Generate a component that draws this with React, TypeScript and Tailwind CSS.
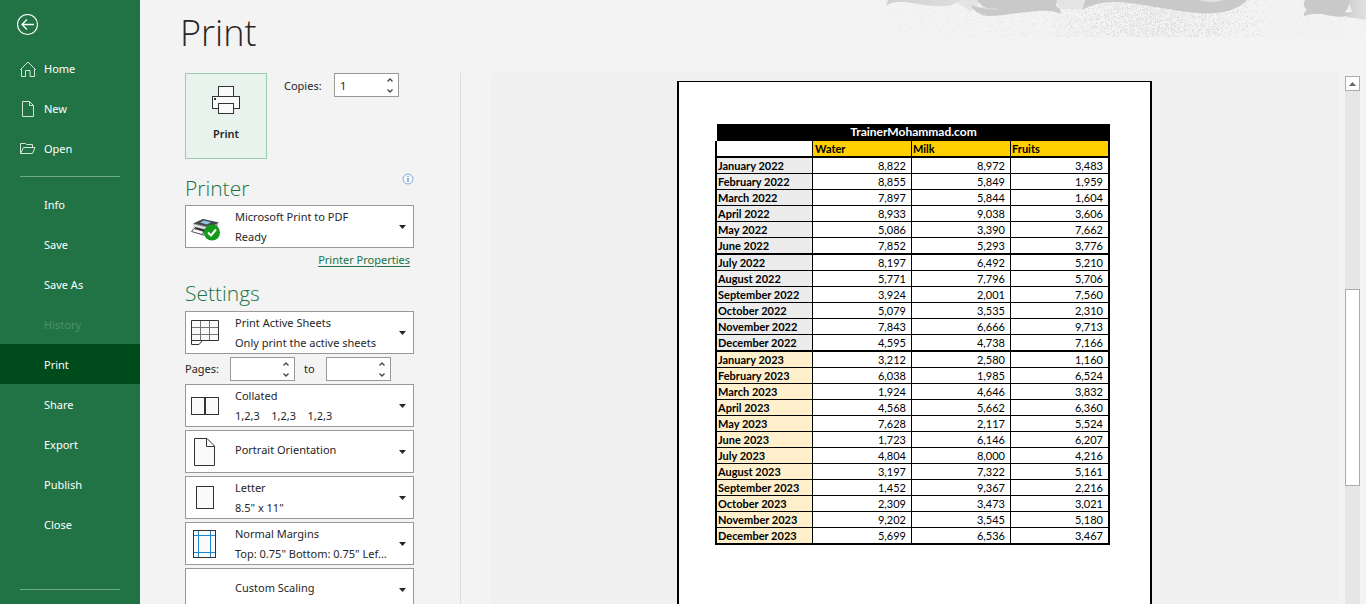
import type { ReactNode } from 'react';

type Row = [string, string, string, string];

const ROWS: Row[] = [
  ['January 2022', '8,822', '8,972', '3,483'],
  ['February 2022', '8,855', '5,849', '1,959'],
  ['March 2022', '7,897', '5,844', '1,604'],
  ['April 2022', '8,933', '9,038', '3,606'],
  ['May 2022', '5,086', '3,390', '7,662'],
  ['June 2022', '7,852', '5,293', '3,776'],
  ['July 2022', '8,197', '6,492', '5,210'],
  ['August 2022', '5,771', '7,796', '5,706'],
  ['September 2022', '3,924', '2,001', '7,560'],
  ['October 2022', '5,079', '3,535', '2,310'],
  ['November 2022', '7,843', '6,666', '9,713'],
  ['December 2022', '4,595', '4,738', '7,166'],
  ['January 2023', '3,212', '2,580', '1,160'],
  ['February 2023', '6,038', '1,985', '6,524'],
  ['March 2023', '1,924', '4,646', '3,832'],
  ['April 2023', '4,568', '5,662', '6,360'],
  ['May 2023', '7,628', '2,117', '5,524'],
  ['June 2023', '1,723', '6,146', '6,207'],
  ['July 2023', '4,804', '8,000', '4,216'],
  ['August 2023', '3,197', '7,322', '5,161'],
  ['September 2023', '1,452', '9,367', '2,216'],
  ['October 2023', '2,309', '3,473', '3,021'],
  ['November 2023', '9,202', '3,545', '5,180'],
  ['December 2023', '5,699', '6,536', '3,467'],
];

/* Rows closed by a two-pixel rule. */
const HEAVY = new Set([5, 11, 23]);

/* Deterministic grain under the ribbons of the header art. */
function grain(count: number, x0: number, x1: number, seedStart: number) {
  let seed = seedStart;
  const next = () => {
    seed = (seed * 1103515245 + 12345) % 2147483648;
    return seed / 2147483648;
  };
  let d = '';
  for (let i = 0; i < count; i++) {
    const x = Math.floor(x0 + ((next() + next()) / 2) * (x1 - x0));
    const y = Math.floor(next() * 37);
    d += `M${x} ${y}h1v1h-1z`;
  }
  return d;
}
const GRAIN_WIDE = grain(1700, 0, 420, 7);
const GRAIN_DENSE = grain(2300, 180, 405, 91);
const GRAIN_RIGHT = grain(500, 360, 520, 33);

function HeaderArt() {
  return (
    <svg className="pointer-events-none absolute top-0 right-0" width="500" height="44" aria-hidden="true">
      <defs>
        <linearGradient id="edge" x1="0" x2="1" y1="0" y2="0">
          <stop offset="0" stopColor="#cfcfcf" />
          <stop offset="1" stopColor="#e0e0e0" />
        </linearGradient>
        <linearGradient id="tail" x1="0" x2="1" y1="0" y2="0">
          <stop offset="0" stopColor="#d0d0d0" />
          <stop offset="1" stopColor="#dedede" />
        </linearGradient>
      </defs>
      <path d={GRAIN_WIDE} fill="#eaeaea" />
      <path d={GRAIN_DENSE} fill="#e1e1e1" />
      <path d={GRAIN_RIGHT} fill="#ececec" />
      <path d="M92 0H114Q112 8 104 11Q98 6 92 4Z M190 0H218L216 9H194Z" fill="#e4e4e4" />
      <path d="M22 0L20 6Q26 1 40 2C54 4 66 7 80 6Q90 5 94 0Z" fill="url(#tail)" />
      <path d="M482 0H500V20Q490 18 480 17L486 12Z" fill="url(#edge)" />
      <path
        d="M111 0Q114 5 120 8Q110 8 105 5Q108 14 122 16C136 16 148 13 162 12C178 10 186 10 195 14L194 9L190 6L191 0Z"
        fill="#c9c9c9"
      />
      <path d="M106 5Q116 9 131 9" fill="none" stroke="#dcdcdc" />
      <path d="M219 0L216 10Q228 3 244 2C276 2 296 10 332 13C360 15 374 8 381 0Z" fill="#c9c9c9" />
      <path d="M332 0Q345 4 358 0Z" fill="#e3e3e3" />
      <path d="M439 0Q436 6 441 10Q437 13 438 16Q446 13 456 14C472 18 482 18 486 12Q482 13 479 12Q484 7 483 0Z" fill="#c9c9c9" />
    </svg>
  );
}

const chrome = 'h-4 w-4 shrink-0';

function HomeIcon() {
  return (
    <svg className={chrome} viewBox="0 0 16 16" fill="none" stroke="#d3e5da" aria-hidden="true">
      <path d="M0.5 8.5L8 1L15.5 8.5M1.5 7.5V15.5H5.5V9.5H10V15.5H14.5V7.5" />
    </svg>
  );
}
function NewIcon() {
  return (
    <svg className={chrome} viewBox="0 0 16 16" fill="none" stroke="#d3e5da" aria-hidden="true">
      <path d="M2.5 0.5H9.5L13.5 4.5V15.5H2.5ZM9.5 0.5V4.5H13.5" />
    </svg>
  );
}
function OpenIcon() {
  return (
    <svg className={chrome} viewBox="0 0 16 16" fill="none" stroke="#d3e5da" aria-hidden="true">
      <path d="M0.5 12.5V2.5H5.5L6.5 3.5H12.5V6.5M0.5 12.5L3.5 6.5H15L12.5 12.5H0.5" />
    </svg>
  );
}

function NavItem({ label, icon, current, disabled }: { label: string; icon?: ReactNode; current?: boolean; disabled?: boolean }) {
  return (
    <li>
      <button
        type="button"
        disabled={disabled}
        aria-current={current ? 'page' : undefined}
        className={`flex h-10 w-full items-center gap-2 pt-0.5 pl-5 text-left ${current ? 'bg-[#004b1c]' : ''} ${
          disabled ? 'text-[#4f9169]' : 'text-white'
        }`}
      >
        {icon ?? <span className="w-4" />}
        {label}
      </button>
    </li>
  );
}

function Sidebar() {
  return (
    <nav aria-label="File" className="flex w-[140px] shrink-0 flex-col bg-[#217346] text-[11px]">
      <button type="button" aria-label="Back" className="mt-3.5 ml-[17px] h-[22px] w-[22px]">
        <svg width="22" height="22" fill="none" stroke="#fff" aria-hidden="true">
          <circle cx="10.5" cy="10.5" r="10" strokeWidth="1.2" />
          <path d="M17 10.5H5.5M10 5.5L5 10.5L10 15.5" strokeWidth="1.3" />
        </svg>
      </button>
      <ul className="mt-3">
        <NavItem label="Home" icon={<HomeIcon />} />
        <NavItem label="New" icon={<NewIcon />} />
        <NavItem label="Open" icon={<OpenIcon />} />
      </ul>
      <hr className="mx-5 mt-2 mb-[7px] border-[#6fab87]" />
      <ul>
        <NavItem label="Info" />
        <NavItem label="Save" />
        <NavItem label="Save As" />
        <NavItem label="History" disabled />
        <NavItem label="Print" current />
        <NavItem label="Share" />
        <NavItem label="Export" />
        <NavItem label="Publish" />
        <NavItem label="Close" />
      </ul>
      <hr className="mx-5 mt-auto mb-3.5 border-[#6fab87]" />
    </nav>
  );
}

function Spinner({ id, label, value }: { id: string; label: string; value?: string }) {
  return (
    <div className="flex h-6 w-[65px] border border-[#999] bg-white">
      <input id={id} aria-label={label} defaultValue={value} inputMode="numeric" className="w-12 min-w-0 flex-1 pt-0.5 pl-[5px] text-[11px] outline-none" />
      <div className="flex w-4 flex-col">
        <button type="button" aria-label={`${label} up`} className="flex flex-1 items-center justify-center">
          <svg width="6" height="4" fill="none" stroke="#444" strokeWidth="1.3" aria-hidden="true">
            <path d="M0.5 3.5L3 1L5.5 3.5" />
          </svg>
        </button>
        <button type="button" aria-label={`${label} down`} className="flex flex-1 items-center justify-center">
          <svg width="6" height="4" fill="none" stroke="#444" strokeWidth="1.3" aria-hidden="true">
            <path d="M0.5 0.5L3 3L5.5 0.5" />
          </svg>
        </button>
      </div>
    </div>
  );
}

function Picker({ label, value, detail, icon }: { label: string; value: string; detail?: string; icon?: ReactNode }) {
  return (
    <div className="grid h-[43px] shrink-0 items-center border border-[#999] bg-white">
      <div className="col-start-1 row-start-1 pl-[5px]">{icon}</div>
      <select
        aria-label={label}
        className={`col-start-1 row-start-1 h-full w-full appearance-none bg-transparent pl-[49px] outline-none ${
          detail ? 'pb-[19px]' : 'pb-0.5'
        }`}
      >
        <option>{value}</option>
      </select>
      {detail && (
        <span className="pointer-events-none col-start-1 row-start-1 self-end pl-[49px] leading-5 whitespace-pre">{detail}</span>
      )}
      <svg className="pointer-events-none col-start-1 row-start-1 mr-[7px] justify-self-end" width="7" height="4" aria-hidden="true">
        <path d="M0 0H7L3.5 4Z" fill="#262626" />
      </svg>
    </div>
  );
}

function PrinterDeviceIcon() {
  return (
    <svg width="32" height="28" aria-hidden="true">
      <path d="M2 11L12 6L27 10L26 19L12 23L2 18Z" fill="#9b9fa2" />
      <path d="M2 10.5L12 6L28 9.5L19 14Z" fill="#45494c" />
      <path d="M9 9.5L13 7.5L20 9.2L16 11.5Z" fill="#8fc4e8" />
      <path d="M2 11L17 15V21L2 17Z" fill="#dfe1e2" />
      <path d="M4 14L14 16.5V19L4 17Z" fill="#2b2d2e" />
      <path d="M0.5 18.5L3 15.5L13 18.5L11 21.5Z" fill="#fff" stroke="#505356" />
      <circle cx="21" cy="19.5" r="8" fill="#129a1b" />
      <path d="M17 19.5L20 22.5L25 16.5" fill="none" stroke="#fff" strokeWidth="2" />
    </svg>
  );
}
function SheetsIcon() {
  return (
    <svg width="30" height="28" aria-hidden="true">
      <path d="M0.5 1.5H27.5V21.5H11.5L8.5 25.5H0.5Z" fill="#fafafa" />
      <path d="M1 8.5H27M1 15.5H27M9.5 2V21M18.5 2V21" stroke="#777" />
      <path d="M0.5 1.5H27.5V21.5H0.5ZM0.5 21.5V25.5H8L11.5 21.5" fill="none" stroke="#333" />
    </svg>
  );
}
function CollatedIcon() {
  return (
    <svg width="28" height="18" fill="#fafafa" stroke="#333" aria-hidden="true">
      <rect x="0.5" y="0.5" width="13" height="17" />
      <rect x="14.5" y="0.5" width="13" height="17" />
    </svg>
  );
}
function PortraitIcon() {
  return (
    <svg className="ml-[3px]" width="22" height="28" fill="#fafafa" stroke="#333" aria-hidden="true">
      <path d="M0.5 0.5H13L20.5 8V27.5H0.5ZM12.5 0.5V8.5H20.5" />
    </svg>
  );
}
function LetterIcon() {
  return (
    <svg className="ml-[5px]" width="18" height="23" fill="#fafafa" stroke="#333" aria-hidden="true">
      <rect x="0.5" y="0.5" width="17" height="22" />
    </svg>
  );
}
function MarginsIcon() {
  return (
    <svg className="ml-0.5" width="23" height="28" fill="none" aria-hidden="true">
      <rect x="0.5" y="0.5" width="22" height="27" fill="#fafafa" />
      <path d="M5.5 1V27M17.5 1V27M1 5.5H22M1 22.5H22" stroke="#1e88cf" />
      <rect x="0.5" y="0.5" width="22" height="27" stroke="#333" />
    </svg>
  );
}

function SettingsPanel() {
  return (
    <section aria-label="Print settings" className="flex w-[229px] shrink-0 flex-col">
      <div className="flex items-start">
        <button
          type="button"
          className="flex h-[86px] w-[82px] flex-col items-center gap-3 border border-[#9bcbb0] bg-[#e9f3ed] pt-3 font-semibold"
        >
          <svg width="28" height="28" fill="#fafafa" stroke="#333" aria-hidden="true">
            <rect x="6.5" y="0.5" width="15" height="12" />
            <rect x="0.5" y="10.5" width="27" height="12" />
            <rect x="6.5" y="17.5" width="15" height="10" />
            <rect x="2" y="12" width="2" height="2" fill="#333" stroke="none" />
          </svg>
          Print
        </button>
        <label htmlFor="copies" className="ml-[17px] w-[50px] pt-px leading-6">
          Copies:
        </label>
        <Spinner id="copies" label="Copies" value="1" />
      </div>

      <div className="mt-3.5 flex h-8 items-start justify-between">
        <h2 className="font-['Open_Sans',sans-serif] text-[21px] leading-[30px] font-light text-[#217346]">Printer</h2>
        <button type="button" aria-label="Printer status" className="h-3 w-3">
          <svg width="12" height="12" fill="none" aria-hidden="true">
            <circle cx="6" cy="6" r="5" fill="#f6f9fe" stroke="#84a9dc" />
            <path d="M6 5V9M6 3V4" stroke="#3f6db5" />
          </svg>
        </button>
      </div>
      <div className="mt-0.5 flex flex-col">
        <Picker label="Printer" value="Microsoft Print to PDF" detail="Ready" icon={<PrinterDeviceIcon />} />
      </div>
      <a href="#properties" className="mt-0.5 mr-1 self-end leading-5 text-[#217346] underline underline-offset-2">
        Printer Properties
      </a>

      <h2 className="mt-2 mb-[3px] font-['Open_Sans',sans-serif] text-[21px] leading-[30px] font-light text-[#217346]">Settings</h2>
      <div className="flex flex-col gap-[3px]">
        <Picker label="What to print" value="Print Active Sheets" detail="Only print the active sheets" icon={<SheetsIcon />} />
        <div className="flex h-6 items-center">
          <label htmlFor="from" className="w-[45px]">
            Pages:
          </label>
          <Spinner id="from" label="From page" />
          <label htmlFor="to" className="w-[31px] pl-[9px]">
            to
          </label>
          <Spinner id="to" label="To page" />
        </div>
        <Picker label="Collation" value="Collated" detail="1,2,3    1,2,3    1,2,3" icon={<CollatedIcon />} />
        <Picker label="Orientation" value="Portrait Orientation" icon={<PortraitIcon />} />
        <Picker label="Paper size" value="Letter" detail={'8.5" x 11"'} icon={<LetterIcon />} />
        <Picker label="Margins" value="Normal Margins" detail={'Top: 0.75" Bottom: 0.75" Lef...'} icon={<MarginsIcon />} />
        <Picker label="Scaling" value="Custom Scaling" />
      </div>
    </section>
  );
}

function SheetTable() {
  return (
    <table className="w-[395px] table-fixed border-separate border-spacing-0 font-[Lato,sans-serif] text-[11px] leading-[14px] text-black">
      <colgroup>
        <col className="w-[98px]" />
        <col className="w-[99px]" />
        <col className="w-[99px]" />
        <col className="w-[99px]" />
      </colgroup>
      <thead>
        <tr className="h-[17px]">
          <th colSpan={4} className="border-l-2 border-white bg-black p-0 pb-0.5 text-xs leading-[14px] font-bold text-white">
            TrainerMohammad.com
          </th>
        </tr>
        <tr className="h-[17px] text-left">
          <td className="border-r border-b-2 border-l-2 border-black p-0" />
          <th scope="col" className="border-r border-b-2 border-black bg-[#ffcf01] p-0 pl-0.5 font-bold">Water</th>
          <th scope="col" className="border-r border-b-2 border-black bg-[#ffcf01] p-0 pl-px font-bold">Milk</th>
          <th scope="col" className="border-r-2 border-b-2 border-black bg-[#ffcf01] p-0 pl-px font-bold">Fruits</th>
        </tr>
      </thead>
      <tbody>
        {ROWS.map(([month, water, milk, fruits], i) => {
          const rule = HEAVY.has(i) ? 'border-b-2' : 'border-b';
          return (
            <tr key={month} className={HEAVY.has(i) ? 'h-[17px]' : 'h-4'}>
              <th
                scope="row"
                className={`border-r border-l-2 border-black p-0 pl-px text-left font-bold whitespace-nowrap ${rule} ${
                  i < 12 ? 'bg-[#ececec]' : 'bg-[#fff0cd]'
                }`}
              >
                {month}
              </th>
              <td className={`border-r border-black p-0 pr-[5px] text-right ${rule}`}>{water}</td>
              <td className={`border-r border-black p-0 pr-[5px] text-right ${rule}`}>{milk}</td>
              <td className={`border-r-2 border-black p-0 pr-[5px] text-right ${rule}`}>{fruits}</td>
            </tr>
          );
        })}
      </tbody>
    </table>
  );
}

function Preview() {
  return (
    <section aria-label="Print preview" className="flex min-w-0 flex-1 justify-center overflow-hidden bg-[#f0f0f0] pt-2">
      <div className="w-[475px] shrink-0 border-x-2 border-t border-black bg-white pt-[42px] pl-9">
        <SheetTable />
      </div>
    </section>
  );
}

function ScrollBar() {
  return (
    <div className="mt-[3px] mr-1.5 ml-[7px] flex w-[15px] shrink-0 flex-col bg-[#e6e6e6]">
      <button type="button" aria-label="Scroll up" className="flex h-[15px] items-center justify-center border border-[#ababab] bg-white">
        <svg width="7" height="4" aria-hidden="true">
          <path d="M0 4H7L3.5 0Z" fill="#666" />
        </svg>
      </button>
      <div className="mt-[198px] h-[197px] border border-[#ababab] bg-white" />
    </div>
  );
}

export default function App() {
  return (
    <div className="flex h-screen overflow-hidden bg-[#f3f3f3] font-['Noto_Sans','Open_Sans',sans-serif] text-[11px] text-[#262626]">
      <Sidebar />
      <main className="relative flex min-w-0 flex-1 flex-col">
        <HeaderArt />
        <h1 className="h-[73px] shrink-0 pt-1.5 pl-10 font-['Open_Sans',sans-serif] text-[36px] leading-[54px] font-light">Print</h1>
        <div className="flex min-h-0 flex-1 pl-[45px]">
          <SettingsPanel />
          <div className="mr-[30px] ml-[46px] w-px shrink-0 bg-[#dcdcdc]" />
          <Preview />
          <ScrollBar />
        </div>
      </main>
    </div>
  );
}
